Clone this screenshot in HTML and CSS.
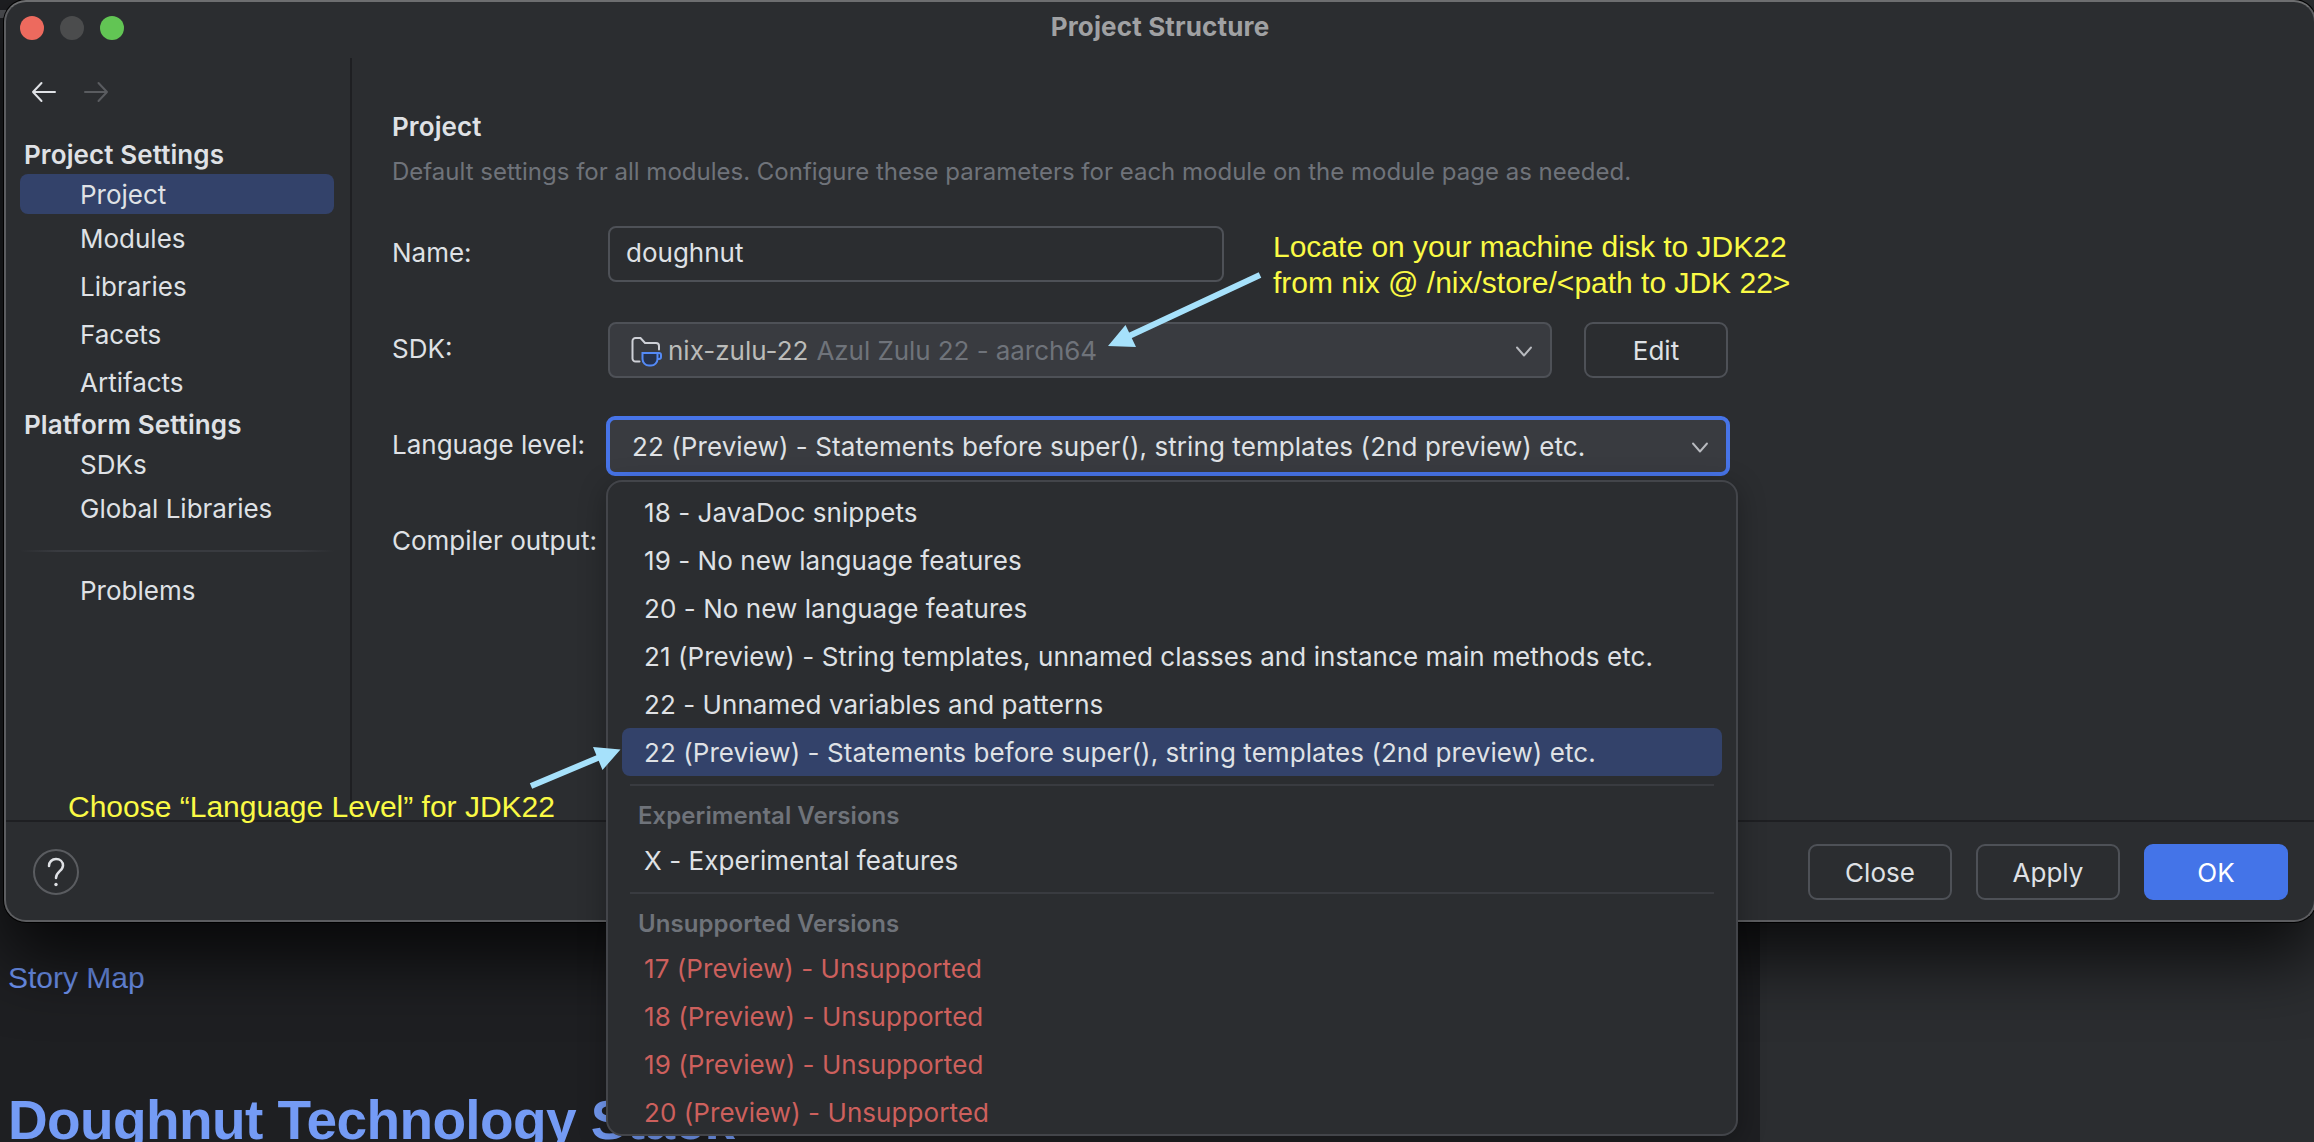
FILE: index.html
```html
<!DOCTYPE html>
<html lang="en">
<head>
<meta charset="utf-8">
<title>Project Structure</title>
<link rel="stylesheet" href="styles.css">
</head>
<body>
<div class="desktop">
  <main class="editor">
    <div class="editor-page">
      <a class="link">Story Map</a>
      <h1 class="doc-title">Doughnut Technology Stack</h1>
    </div>
    <div class="editor-side"></div>
  </main>
  <span class="strip"></span>

  <section class="window">
    <header class="titlebar">
      <div class="lights"><i class="light red"></i><i class="light off"></i><i class="light green"></i></div>
      <h2 class="title">Project Structure</h2>
    </header>
    <div class="content">
      <nav class="sidebar">
        <div class="history">
          <svg class="arrow" width="28" height="24" viewBox="0 0 28 24"><path d="M25 12H3M11.500 3L3 12l8.500 9"/></svg>
          <svg class="arrow dim" width="28" height="24" viewBox="0 0 28 24"><path d="M3 12h22M16.500 3l8.500 9-8.500 9"/></svg>
        </div>
        <div class="group">Project Settings</div>
        <div class="nav selected">Project</div>
        <div class="nav compact">Modules</div>
        <div class="nav">Libraries</div>
        <div class="nav">Facets</div>
        <div class="nav">Artifacts</div>
        <div class="group platform">Platform Settings</div>
        <div class="nav sdks">SDKs</div>
        <div class="nav compact">Global Libraries</div>
        <div class="rule"></div>
        <div class="nav">Problems</div>
      </nav>
      <div class="panel">
        <h3 class="heading">Project</h3>
        <p class="hint">Default settings for all modules. Configure these parameters for each module on the module page as needed.</p>
        <div class="row"><label>Name:</label><div class="field name">doughnut</div></div>
        <div class="row"><label>SDK:</label>
          <div class="field sdk">
            <svg class="sdk-icon" width="32" height="32" viewBox="0 0 32 32"><path class="folder" d="M9.500 26.500H5.500a3 3 0 0 1-3-3V6a3 3 0 0 1 3-3H10.500L15 8H26a3 3 0 0 1 3 3v3.500"/><path class="cup" d="M12.500 18h15v6a6.500 6.500 0 0 1-6.500 6.500h-2a6.500 6.500 0 0 1-6.500-6.500zM27.500 18h1.500a2 2 0 0 1 2 2v2a2 2 0 0 1-2 2h-1.500"/></svg>
            <span class="sdk-name">nix-zulu-22</span><span class="sdk-detail">Azul Zulu 22 - aarch64</span>
            <svg class="chevron" width="20" height="14" viewBox="0 0 20 14"><path d="M3 3.500l7 8L17 3.500"/></svg>
          </div>
          <button class="button">Edit</button>
        </div>
        <div class="row"><label>Language level:</label>
          <div class="field level"><span>22 (Preview) - Statements before super(), string templates (2nd preview) etc.</span>
            <svg class="chevron" width="20" height="14" viewBox="0 0 20 14"><path d="M3 3.500l7 8L17 3.500"/></svg>
          </div>
        </div>
        <div class="row"><label>Compiler output:</label></div>
      </div>
    </div>
    <footer class="footer">
      <div class="help"><svg width="24" height="36" viewBox="0 0 24 36"><path d="M5 12c0-4 3-7 7-7s7 2.700 7 6.500c0 5.500-7 6-7 12.500"/><circle cx="12" cy="30.500" r="1.700"/></svg></div>
      <div class="actions"><button class="button">Close</button><button class="button">Apply</button><button class="button primary">OK</button></div>
    </footer>
  </section>

  <div class="popup">
    <div class="option">18 - JavaDoc snippets</div>
    <div class="option">19 - No new language features</div>
    <div class="option">20 - No new language features</div>
    <div class="option">21 (Preview) - String templates, unnamed classes and instance main methods etc.</div>
    <div class="option">22 - Unnamed variables and patterns</div>
    <div class="option active">22 (Preview) - Statements before super(), string templates (2nd preview) etc.</div>
    <div class="section">Experimental Versions</div>
    <div class="option">X - Experimental features</div>
    <div class="section">Unsupported Versions</div>
    <div class="option bad">17 (Preview) - Unsupported</div>
    <div class="option bad">18 (Preview) - Unsupported</div>
    <div class="option bad">19 (Preview) - Unsupported</div>
    <div class="option bad">20 (Preview) - Unsupported</div>
  </div>

  <p class="note note-sdk">Locate on your machine disk to JDK22<br>from nix @ /nix/store/&lt;path to JDK 22&gt;</p>
  <p class="note note-level">Choose “Language Level” for JDK22</p>
  <svg class="pointers" width="2314" height="1142" viewBox="0 0 2314 1142">
    <path class="shaft" d="M1260 275L1128 336.500M531 786L600 757"/>
    <path class="head" d="M1108 346L1125.500 325L1136 347zM620.500 749.500L593 747L602.500 770z"/>
  </svg>
</div>
</body>
</html>
```
FILE: styles.css
```css
* { box-sizing: border-box; }
body { margin: 0; background: #1e1f22; }
h1, h2, h3, p { margin: 0; }
.desktop {
  position: relative;
  width: 2314px;
  height: 1142px;
  overflow: hidden;
  font: 26px/32px Inter, "Liberation Sans", sans-serif;
  color: #dfe1e5;
  white-space: nowrap;
}

/* editor behind the dialog */
.editor { display: flex; height: 1142px; }
.editor-page { width: 1760px; padding: 960px 0 0 8px; background: #1e1f22; font-family: "Liberation Sans", Arial, sans-serif; overflow: hidden; }
.editor-side { flex: 1; background: #2b2d30; }
.link { display: block; font-size: 30px; line-height: 36px; color: #7096f5; }
.doc-title { margin-top: 91px; font-size: 55px; line-height: 66px; letter-spacing: -.6px; color: #749bf5; }
.strip { position: absolute; left: 0; top: 10px; width: 6px; height: 8px; background: #4b4c50; }

/* dialog */
.window {
  position: absolute;
  left: 4px;
  top: 0;
  width: 2312px;
  height: 922px;
  display: flex;
  flex-direction: column;
  border: 2px solid #5c5d60;
  border-top-color: #6d6e70;
  border-radius: 22px;
  background: #2b2d30;
  box-shadow: 0 0 0 1px #000, 0 36px 70px rgba(0, 0, 0, .75);
}
.titlebar { display: flex; align-items: center; height: 56px; padding-left: 14px; }
.lights { display: flex; gap: 16px; width: 104px; margin-top: -4px; }
.light { width: 24px; height: 24px; border-radius: 50%; }
.red { background: #ed6a5e; }
.off { background: #4b4c4d; }
.green { background: #62c554; }
.title { flex: 1; margin: -6px 118px 0 0; text-align: center; font-size: 26px; line-height: 32px; font-weight: 700; letter-spacing: .15px; color: #a0a1a3; }
.content { display: flex; height: 762px; }
.sidebar { width: 346px; border-right: 2px solid #1e1f22; padding: 22px 16px 0 14px; }
.history { display: flex; gap: 24px; height: 59px; padding-left: 10px; }
.arrow { fill: none; stroke: #dfe1e5; stroke-width: 2; stroke-linecap: round; stroke-linejoin: round; }
.arrow.dim { stroke: #5a5c60; }
.group { height: 35px; padding: 0 4px; font-weight: 600; letter-spacing: .1px; }
.platform { height: 42px; padding-top: 7px; }
.nav { height: 48px; padding: 13px 0 0 60px; }
.compact { height: 44px; padding-top: 9px; }
.selected { height: 40px; padding-top: 5px; border-radius: 8px; background: #33426a; }
.sdks { height: 40px; padding-top: 5px; }
.rule { height: 2px; margin: 22px 0 10px; background: linear-gradient(90deg, transparent, #393b40 12%, #393b40 88%, transparent); }
.panel { flex: 1; padding: 47px 0 0 40px; }
.heading { margin-bottom: 1px; font-size: 26px; line-height: 44px; font-weight: 600; letter-spacing: .1px; }
.hint { font-size: 24px; line-height: 44px; color: #6f737a; }
.row { display: flex; align-items: center; height: 96px; }
.hint + .row { margin-top: 12px; }
.row label { width: 216px; margin-top: -2px; }
.field { display: flex; align-items: center; height: 56px; border: 2px solid #4e5157; border-radius: 8px; }
.name { width: 616px; padding: 0 0 2px 16px; }
.sdk { width: 944px; padding: 2px 0 0 20px; background: #393b40; }
.sdk-icon { margin-right: 6px; }
.folder { fill: none; stroke: #ced0d6; stroke-width: 2; stroke-linecap: round; }
.cup { fill: #25324d; stroke: #548af7; stroke-width: 2; }
.sdk-name { margin-right: 8px; color: #bbbbb9; }
.sdk-detail { color: #6f737a; letter-spacing: -.06px; }
.chevron { margin-left: auto; margin-right: 16px; fill: none; stroke: #b8babf; stroke-width: 1.900; stroke-linecap: round; stroke-linejoin: round; }
.level { width: 1124px; height: 60px; margin-left: -2px; padding: 2px 0 0 22px; border: 4px solid #4774e8; border-radius: 9px; background: #393b40; letter-spacing: .08px; }
.button { width: 144px; height: 56px; margin: 0; padding: 2px 0 0; border: 2px solid #4e5157; border-radius: 9px; background: #2b2d30; color: #dfe1e5; font: inherit; }
.row .button { margin-left: 32px; }
.footer { flex: 1; display: flex; align-items: center; justify-content: space-between; padding: 2px 26px 0 27px; border-top: 2px solid #1e1f22; }
.help { display: flex; align-items: center; justify-content: center; width: 46px; height: 46px; border: 2px solid #5a5c60; border-radius: 50%; }
.help path { fill: none; stroke: #dfe1e5; stroke-width: 2.500; stroke-linecap: round; }
.help circle { fill: #dfe1e5; }
.actions { display: flex; gap: 24px; }
.primary { border-color: #4474e8; background: #4474e8; color: #fff; }

/* language level list */
.popup {
  position: absolute;
  left: 606px;
  top: 480px;
  width: 1132px;
  height: 656px;
  padding: 6px 14px 0;
  border: 2px solid #43454a;
  border-radius: 16px;
  background: #2b2d30;
  box-shadow: 0 6px 28px rgba(0, 0, 0, .3);
}
.option { height: 48px; padding: 9px 22px 0; border-radius: 8px; letter-spacing: .06px; }
.active { background: #33426a; }
.section { height: 52px; margin: 8px 8px 0; padding: 14px 8px 0; border-top: 2px solid #393b40; font-size: 24px; line-height: 32px; font-weight: 600; letter-spacing: .06px; color: #6f737a; }
.bad { color: #cd605d; }

/* annotations */
.note { position: absolute; font: 30px/36px "Liberation Sans", Arial, sans-serif; color: #fafa45; }
.note-sdk { left: 1273px; top: 229px; }
.note-level { left: 68px; top: 789px; }
.pointers { position: absolute; left: 0; top: 0; }
.shaft { fill: none; stroke: #a6e1fb; stroke-width: 6; }
.head { fill: #a6e1fb; }
```
